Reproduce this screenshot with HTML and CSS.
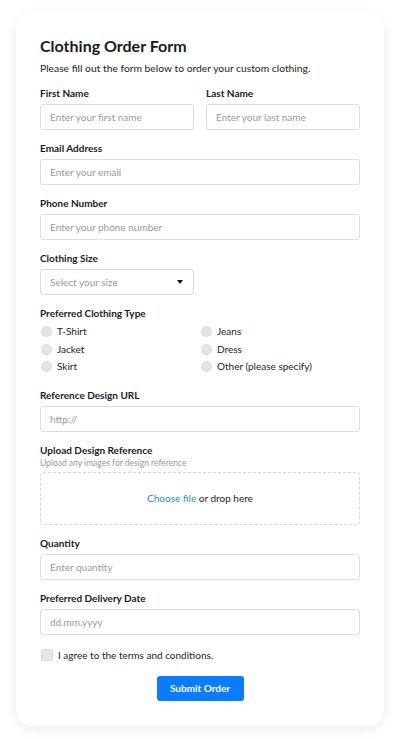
FILE: index.html
```html
<!DOCTYPE html>
<html lang="en">
<head>
<meta charset="utf-8">
<title>Clothing Order Form</title>
<link rel="stylesheet" href="styles.css">
</head>
<body>
<main class="card">
  <h1 class="title">Clothing Order Form</h1>
  <p class="subtitle">Please fill out the form below to order your custom clothing.</p>

  <div class="row">
    <div class="field">
      <label class="label">First Name</label>
      <div class="input"><span class="ph">Enter your first name</span></div>
    </div>
    <div class="field">
      <label class="label">Last Name</label>
      <div class="input"><span class="ph">Enter your last name</span></div>
    </div>
  </div>

  <div class="field">
    <label class="label">Email Address</label>
    <div class="input"><span class="ph">Enter your email</span></div>
  </div>

  <div class="field">
    <label class="label">Phone Number</label>
    <div class="input"><span class="ph">Enter your phone number</span></div>
  </div>

  <div class="field">
    <label class="label">Clothing Size</label>
    <div class="input select"><span class="ph">Select your size</span><span class="caret"></span></div>
  </div>

  <div class="field field-radios">
    <label class="label">Preferred Clothing Type</label>
    <div class="radios">
      <div class="radio"><span class="dot"></span>T-Shirt</div>
      <div class="radio"><span class="dot"></span>Jeans</div>
      <div class="radio"><span class="dot"></span>Jacket</div>
      <div class="radio"><span class="dot"></span>Dress</div>
      <div class="radio"><span class="dot"></span>Skirt</div>
      <div class="radio"><span class="dot"></span>Other (please specify)</div>
    </div>
  </div>

  <div class="field">
    <label class="label">Reference Design URL</label>
    <div class="input"><span class="ph">http://</span></div>
  </div>

  <div class="field">
    <label class="label">Upload Design Reference</label>
    <div class="hint">Upload any images for design reference</div>
    <div class="drop"><span class="link">Choose file</span>&nbsp;or drop here</div>
  </div>

  <div class="field">
    <label class="label">Quantity</label>
    <div class="input"><span class="ph">Enter quantity</span></div>
  </div>

  <div class="field">
    <label class="label">Preferred Delivery Date</label>
    <div class="input"><span class="ph">dd.mm.yyyy</span></div>
  </div>

  <div class="check"><span class="box"></span>I agree to the terms and conditions.</div>

  <div class="actions"><button class="submit">Submit Order</button></div>
</main>
</body>
</html>
```

FILE: styles.css
```css
* { box-sizing: border-box; }
html, body { margin: 0; padding: 0; background: #fff; }
body {
  font-family: Lato, "Open Sans", sans-serif;
  color: #222;
  padding: 12px 16px;
}
.card {
  background: #fff;
  border-radius: 16px;
  box-shadow: 0 3px 14px rgba(0,0,0,0.08);
  padding: 24px 24px 25px;
  display: flex;
  flex-direction: column;
}
.title {
  margin: 0;
  font-size: 16px;
  line-height: 20px;
  font-weight: 700;
  color: #1a1a1a;
}
.subtitle {
  margin: 5px 0 11px;
  font-size: 10.3px;
  line-height: 14px;
  color: #222;
}
.row {
  display: grid;
  grid-template-columns: 1fr 1fr;
  gap: 12px;
}
.field {
  display: flex;
  flex-direction: column;
  margin-bottom: 11px;
}
.field-radios { margin-bottom: 14px; }
.label {
  font-size: 10px;
  line-height: 14px;
  font-weight: 700;
  color: #1a1a1a;
  margin-bottom: 4px;
}
.input {
  height: 26px;
  border: 1px solid #dcdcdc;
  border-radius: 3px;
  padding: 0 9px;
  display: flex;
  align-items: center;
  background: #fff;
}
.ph {
  font-size: 10px;
  color: #9a9a9a;
}
.select {
  width: 154px;
  justify-content: space-between;
}
.caret {
  width: 0; height: 0;
  border-left: 3.5px solid transparent;
  border-right: 3.5px solid transparent;
  border-top: 4px solid #111;
  margin-right: 1px;
}
.radios {
  display: grid;
  grid-template-columns: 1fr 1fr;
  column-gap: 0;
  row-gap: 4px;
  padding-top: 1px;
}
.radio {
  display: flex;
  align-items: center;
  font-size: 10px;
  line-height: 13.5px;
  color: #222;
}
.dot {
  width: 11px; height: 11px;
  border-radius: 50%;
  background: #e4e4e4;
  border: 1px solid #dadada;
  margin-right: 5px;
  margin-left: 1px;
}
.hint {
  font-size: 8.5px;
  line-height: 10px;
  color: #999;
  margin: -3px 0 4px;
}
.drop {
  height: 53px;
  border: 1px dashed #d6d6d6;
  border-radius: 3px;
  display: flex;
  align-items: center;
  justify-content: center;
  font-size: 10px;
  color: #222;
}
.link { color: #1a8cff; }
.check {
  display: flex;
  align-items: center;
  font-size: 10px;
  line-height: 14px;
  color: #222;
  margin-top: 2px;
}
.box {
  width: 12px; height: 12px;
  border-radius: 2px;
  background: #e6e6e6;
  border: 1px solid #dadada;
  margin: 0 5px 0 1px;
}
.actions {
  display: flex;
  justify-content: center;
  margin-top: 14px;
}
.submit {
  font-family: inherit;
  width: 87px;
  height: 25px;
  border: 0;
  border-radius: 3px;
  background: #0a7cff;
  color: #fff;
  font-size: 10px;
  font-weight: 700;
}
```
